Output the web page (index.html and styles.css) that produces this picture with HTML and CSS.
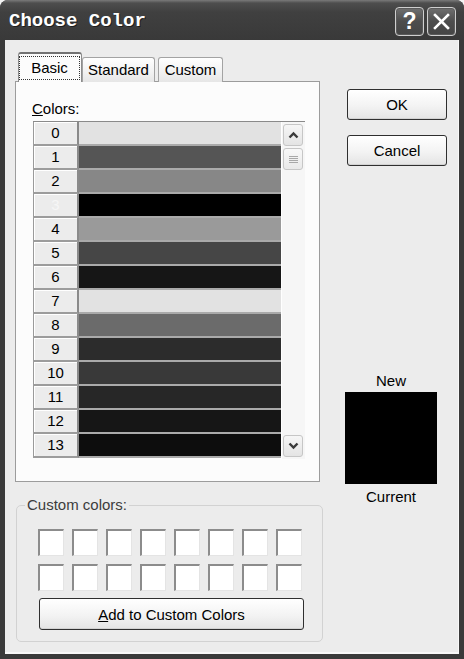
FILE: index.html
```html
<!DOCTYPE html>
<html>
<head>
<meta charset="utf-8">
<link rel="stylesheet" href="styles.css">
</head>
<body>
<div class="window">
  <div class="titlebar">
    <div class="title">Choose Color</div>
    <div class="tbtn help">?</div>
    <div class="tbtn close">
      <svg width="17" height="17" viewBox="0 0 17 17"><path d="M2 2 L15 15 M15 2 L2 15" stroke="#fff" stroke-width="2.6" stroke-linecap="square"/></svg>
    </div>
  </div>
  <div class="client">
    <div class="left">
      <div class="tabs">
        <div class="tab sel"><span class="focus">Basic</span></div>
        <div class="tab std">Standard</div>
        <div class="tab cus">Custom</div>
      </div>
      <div class="panel">
        <div class="label"><u>C</u>olors:</div>
        <div class="list">
          <div class="rows">
            <div class="row"><div class="num">0</div><div class="bar c0"></div></div>
            <div class="row"><div class="num">1</div><div class="bar c1"></div></div>
            <div class="row"><div class="num">2</div><div class="bar c2"></div></div>
            <div class="row"><div class="num dim">3</div><div class="bar c3"></div></div>
            <div class="row"><div class="num">4</div><div class="bar c4"></div></div>
            <div class="row"><div class="num">5</div><div class="bar c5"></div></div>
            <div class="row"><div class="num">6</div><div class="bar c6"></div></div>
            <div class="row"><div class="num">7</div><div class="bar c7"></div></div>
            <div class="row"><div class="num">8</div><div class="bar c8"></div></div>
            <div class="row"><div class="num">9</div><div class="bar c9"></div></div>
            <div class="row"><div class="num">10</div><div class="bar c10"></div></div>
            <div class="row"><div class="num">11</div><div class="bar c11"></div></div>
            <div class="row"><div class="num">12</div><div class="bar c12"></div></div>
            <div class="row"><div class="num">13</div><div class="bar c13"></div></div>
          </div>
          <div class="sb">
            <div class="sbtn">
              <svg width="11" height="8" viewBox="0 0 11 8"><path d="M1.5 6.5 L5.5 2.5 L9.5 6.5" fill="none" stroke="#3a3a3a" stroke-width="2.4"/></svg>
            </div>
            <div class="thumb">
              <svg width="9" height="9" viewBox="0 0 9 9"><path d="M0 1.5 H9 M0 3.5 H9 M0 5.5 H9 M0 7.5 H9" stroke="#a8a8a8" stroke-width="1"/></svg>
            </div>
            <div class="sbtn down">
              <svg width="11" height="8" viewBox="0 0 11 8"><path d="M1.5 1.5 L5.5 5.5 L9.5 1.5" fill="none" stroke="#3a3a3a" stroke-width="2.4"/></svg>
            </div>
          </div>
        </div>
      </div>
      <fieldset class="group">
        <legend>Custom colors:</legend>
        <div class="group-inner">
          <div class="swatches">
            <div class="sw"></div><div class="sw"></div><div class="sw"></div><div class="sw"></div>
            <div class="sw"></div><div class="sw"></div><div class="sw"></div><div class="sw"></div>
            <div class="sw"></div><div class="sw"></div><div class="sw"></div><div class="sw"></div>
            <div class="sw"></div><div class="sw"></div><div class="sw"></div><div class="sw"></div>
          </div>
          <div class="btn add"><u>A</u>dd to Custom Colors</div>
        </div>
      </fieldset>
    </div>
    <div class="right">
      <div class="btn ok">OK</div>
      <div class="btn cancel">Cancel</div>
      <div class="preview">
        <div class="plabel new">New</div>
        <div class="psq"></div>
        <div class="plabel">Current</div>
      </div>
    </div>
  </div>
</div>
</body>
</html>
```
FILE: styles.css
```css
* { box-sizing: border-box; }
html, body { margin: 0; padding: 0; background: #f4f4f4; }
body { font-family: "Liberation Sans", Arial, sans-serif; font-size: 15px; color: #000; }

.window {
  width: 464px; height: 659px;
  background: #3a3a3a;
  border-radius: 8px 8px 0 0;
  display: flex; flex-direction: column;
  padding: 0 5px 5px;
  overflow: hidden;
}
.titlebar {
  height: 40px; flex: none;
  margin: 0 -5px;
  padding: 2px 8px 0 9px;
  display: flex; align-items: center;
  background: linear-gradient(#7a7a7a 0, #4e4e4e 3px, #404040 12px, #393939 100%);
}
.title {
  flex: 1;
  color: #fff;
  font-family: "Liberation Mono", "DejaVu Sans Mono", monospace;
  font-weight: bold;
  font-size: 19px;
  text-shadow: 1px 1px 0 #1e1e1e;
}
.tbtn {
  width: 29px; height: 29px;
  border: 1px solid #cfcfcf;
  border-radius: 4px;
  background: linear-gradient(#707070, #4d4d4d 50%, #454545);
  display: flex; align-items: center; justify-content: center;
  color: #fff;
  box-shadow: inset 0 0 0 1px #5a5a5a;
}
.help { font-size: 23px; font-weight: bold; line-height: 1; }
.close { margin-left: 3px; }

.client {
  flex: 1;
  background: #ececec;
  display: flex;
  padding: 13px 0 0 10px;
  box-shadow: inset -1px -2px 0 #f8f8f8;
}
.left { width: 308px; display: flex; flex-direction: column; }

.tabs {
  height: 29px;
  display: flex; align-items: flex-end;
  padding-left: 3px;
  margin-bottom: -1px;
  position: relative; z-index: 1;
}
.tab {
  height: 25px;
  border: 1px solid #a3a3a3;
  border-bottom: none;
  border-radius: 3px 3px 0 0;
  background: linear-gradient(#ffffff, #f1f1f1 60%, #e6e6e6);
  display: flex; align-items: center; justify-content: center;
  padding-bottom: 1px;
}
.tab.sel {
  width: 64px; height: 30px;
  background: #fcfcfc;
  border-color: #8c8c8c;
  border-top: 2px solid #727272;
  padding: 2px 1px 2px 0;
  align-items: stretch;
}
.focus {
  flex: 1;
  border: 1px dotted #333;
  display: flex; align-items: center; justify-content: center;
  padding-bottom: 2px;
}
.std { width: 73px; }
.cus { width: 65px; margin-left: 3px; }

.panel {
  width: 305px; height: 401px;
  border: 1px solid #9c9c9c;
  background: #fcfcfc;
  padding: 18px 0 0 16px;
}
.label { height: 17px; line-height: 17px; margin-bottom: 4px; }

.list {
  width: 272px; height: 338px;
  margin-left: 1px;
  border-top: 1px solid #8a8a8a;
  display: flex;
}
.rows { width: 248px; }
.row { display: flex; height: 24px; }
.num {
  width: 46px; height: 24px;
  background: #ececec;
  border-left: 1px solid #9a9a9a;
  border-right: 2px solid #8a8a8a;
  border-bottom: 2px solid #9c9c9c;
  box-shadow: inset 1px 1px 0 #fff;
  text-align: center;
  line-height: 22px;
}
.num.dim { color: #f6f6f6; }
.bar { flex: 1; height: 24px; border-bottom: 2px solid #aaaaaa; }
.c0 { background: #e2e2e2; }
.c1 { background: #555555; }
.c2 { background: #878787; }
.c3 { background: #000000; }
.c4 { background: #9a9a9a; }
.c5 { background: #464646; }
.c6 { background: #161616; }
.c7 { background: #e2e2e2; }
.c8 { background: #6b6b6b; }
.c9 { background: #2c2c2c; }
.c10 { background: #393939; }
.c11 { background: #272727; }
.c12 { background: #161616; }
.c13 { background: #0d0d0d; }

.sb {
  width: 24px;
  background: #f6f6f6;
  border-left: 1px solid #fff;
  display: flex; flex-direction: column;
  padding: 2px 2px 2px 1px;
}
.sbtn, .thumb {
  height: 22px;
  border: 1px solid #c6c6c6;
  border-radius: 3px;
  background: linear-gradient(#f6f6f6, #e4e4e4);
  display: flex; align-items: center; justify-content: center;
}
.thumb { margin-top: 2px; background: linear-gradient(#f8f8f8, #e9e9e9); }
.down { margin-top: auto; }

.group {
  margin: 15px 0 0 1px;
  width: 307px;
  border: 1px solid #d2d2d2;
  border-radius: 5px;
  padding: 0 0 11px 0;
}
.group legend {
  margin-left: 8px;
  padding: 0 2px;
  line-height: 16px;
  color: #3c3c3c;
}
.group-inner { padding-left: 21px; }
.swatches {
  margin-top: 16px;
  display: grid;
  grid-template-columns: repeat(8, 26px);
  grid-auto-rows: 27px;
  column-gap: 8px;
  row-gap: 8px;
}
.sw {
  background: #fff;
  border-top: 2px solid #8c8c8c;
  border-left: 2px solid #8c8c8c;
  border-right: 1px solid #e4e4e4;
  border-bottom: 1px solid #e4e4e4;
}

.btn {
  border: 1px solid #2f2f2f;
  border-radius: 3px;
  background: linear-gradient(#ffffff, #f3f3f3 55%, #e4e4e4);
  box-shadow: inset 0 -1px 0 #d2d2d2, inset 0 1px 0 #fff;
  display: flex; align-items: center; justify-content: center;
}
.add { margin: 7px 0 0 1px; width: 265px; height: 32px; }

.right {
  margin-left: 22px;
  display: flex; flex-direction: column;
  padding-top: 36px;
}
.ok, .cancel { width: 100px; height: 31px; margin-left: 2px; }
.cancel { margin-top: 15px; }
.preview { width: 92px; margin-top: 206px; display: flex; flex-direction: column; }
.plabel { height: 17px; line-height: 17px; text-align: center; }
.psq { height: 92px; background: #000; margin: 3px 0 4px; }
```
